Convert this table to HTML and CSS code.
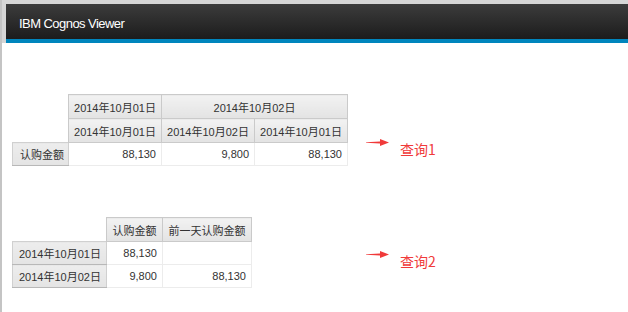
FILE: index.html
```html
<!DOCTYPE html>
<html lang="zh-CN">
<head>
<meta charset="utf-8">
<title>IBM Cognos Viewer</title>
<link rel="stylesheet" href="styles.css">
</head>
<body>
<div class="frame">
  <div class="chrome">
    <header class="banner">
      <span class="banner-title">IBM Cognos Viewer</span>
    </header>
  </div>
  <main class="content">
    <section class="report">
      <div class="table-slot">
        <table class="xtab">
          <tr>
            <td class="corner" rowspan="2"></td>
            <th class="col-head">2014年10月01日</th>
            <th class="col-head" colspan="2">2014年10月02日</th>
          </tr>
          <tr>
            <th class="col-head w1">2014年10月01日</th>
            <th class="col-head w1">2014年10月02日</th>
            <th class="col-head w1">2014年10月01日</th>
          </tr>
          <tr>
            <th class="row-head rh1">认购金额</th>
            <td class="num">88,130</td>
            <td class="num">9,800</td>
            <td class="num">88,130</td>
          </tr>
        </table>
      </div>
      <div class="note note-1">
        <svg class="arrow" width="23" height="7" viewBox="0 0 23 7"><path d="M0 3.2 L14 2.6 L14 0 L23 3.5 L14 7 L14 4.4 L0 3.8 Z" fill="#f03a3a"/></svg>
        <span class="note-text">查询1</span>
      </div>
    </section>
    <section class="report">
      <div class="table-slot">
        <table class="xtab">
          <tr>
            <td class="corner"></td>
            <th class="col-head w2">认购金额</th>
            <th class="col-head w3">前一天认购金额</th>
          </tr>
          <tr>
            <th class="row-head">2014年10月01日</th>
            <td class="num">88,130</td>
            <td class="num"></td>
          </tr>
          <tr>
            <th class="row-head">2014年10月02日</th>
            <td class="num">9,800</td>
            <td class="num">88,130</td>
          </tr>
        </table>
      </div>
      <div class="note note-2">
        <svg class="arrow" width="23" height="7" viewBox="0 0 23 7"><path d="M0 3.2 L14 2.6 L14 0 L23 3.5 L14 7 L14 4.4 L0 3.8 Z" fill="#f03a3a"/></svg>
        <span class="note-text">查询2</span>
      </div>
    </section>
  </main>
</div>
</body>
</html>
```
FILE: styles.css
```css
html, body {
  margin: 0;
  padding: 0;
  background: #ffffff;
}
body {
  font-family: "Liberation Sans", Arial, "Noto Sans CJK SC", sans-serif;
}
.frame {
  border-left: 2px solid #c4c4c4;
  min-height: 312px;
  box-sizing: border-box;
}
.chrome {
  background: #d6d6d6;
  padding: 4px 0 0 4px;
}
.banner {
  height: 35px;
  background: linear-gradient(#3c3c3c, #1c1c1c);
  border-bottom: 4px solid #0085bd;
  display: flex;
  align-items: center;
  padding-left: 13px;
}
.banner-title {
  color: #ffffff;
  font-size: 13px;
  letter-spacing: -0.55px;
  padding-top: 3px;
}
.content {
  padding: 51px 0 0 10px;
  display: flex;
  flex-direction: column;
  gap: 51px;
}
.report {
  display: flex;
  align-items: flex-start;
}
.table-slot {
  width: 354px;
}
.xtab {
  border-collapse: collapse;
  font-size: 11px;
  color: #333333;
}
.xtab th, .xtab td {
  padding: 0 5px;
  white-space: nowrap;
}
.corner {
  width: 40px;
  padding: 0;
}
.col-head {
  height: 23px;
  font-weight: normal;
  text-align: center;
  background: linear-gradient(#f2f2f2, #e3e3e3);
  border: 1px solid #cacaca;
}
.w1 { width: 82px; }
.w2 { width: 45px; }
.w3 { width: 78px; }
.xtab .row-head {
  height: 22px;
  font-weight: normal;
  text-align: left;
  padding-left: 6px;
  padding-right: 5px;
  background: linear-gradient(#ededed, #e4e4e4);
  border: 1px solid #d0d0d0;
  border-bottom: 1px solid #b8b8b8;
}
.xtab .rh1 {
  padding-left: 7px;
  padding-right: 4px;
}
.num {
  text-align: right;
  border: 1px solid #ececec;
  background: #ffffff;
}
.note {
  display: flex;
  align-items: flex-start;
  gap: 11px;
}
.note-1 { margin-top: 44px; }
.note-2 { margin-top: 33px; }
.arrow {
  margin-top: 1px;
  display: block;
}
.note-text {
  color: #f03a3a;
  font-family: "Noto Sans CJK SC", sans-serif;
  font-size: 14px;
  line-height: 14px;
  margin-top: 4px;
}
```
